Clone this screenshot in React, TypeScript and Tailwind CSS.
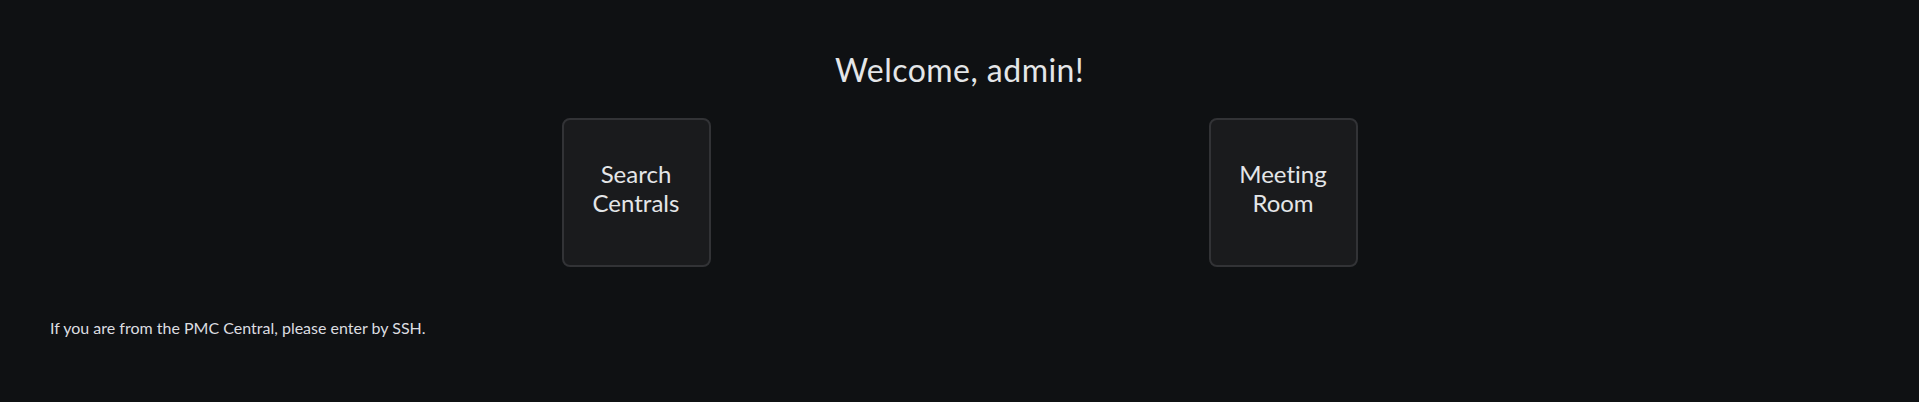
import React from "react";

const tiles = [
  { id: "search", label: ["Search", "Centrals"] },
  { id: "meeting", label: ["Meeting", "Room"] },
];

export default function App() {
  return (
    <div className="min-h-screen w-full bg-[#0f1113] text-[#e4e6e8] font-['Lato',sans-serif] [font-variant-ligatures:none]">
      {/* Greeting */}
      <div className="pt-[50px] text-center">
        <h1 className="text-[32px] leading-[40px] font-normal tracking-[0.015em]">Welcome, admin!</h1>
      </div>

      {/* Tiles */}
      <div className="mt-[28px] flex justify-center gap-[498px]">
        {tiles.map((t) => (
          <button
            key={t.id}
            className="w-[149px] h-[149px] pb-[9px] flex items-center justify-center rounded-lg border-2 border-[#323336] bg-[#1a1b1d] text-center text-[24px] leading-[29px] text-[#e4e6e8]"
          >
            <span>
              {t.label[0]}
              <br />
              {t.label[1]}
            </span>
          </button>
        ))}
      </div>

      {/* Footer note */}
      <p className="mt-[49px] pl-[50px] text-[16px] leading-[24px] text-[#dcdde0]">
        If you are from the PMC Central, please enter by SSH.
      </p>
    </div>
  );
}
